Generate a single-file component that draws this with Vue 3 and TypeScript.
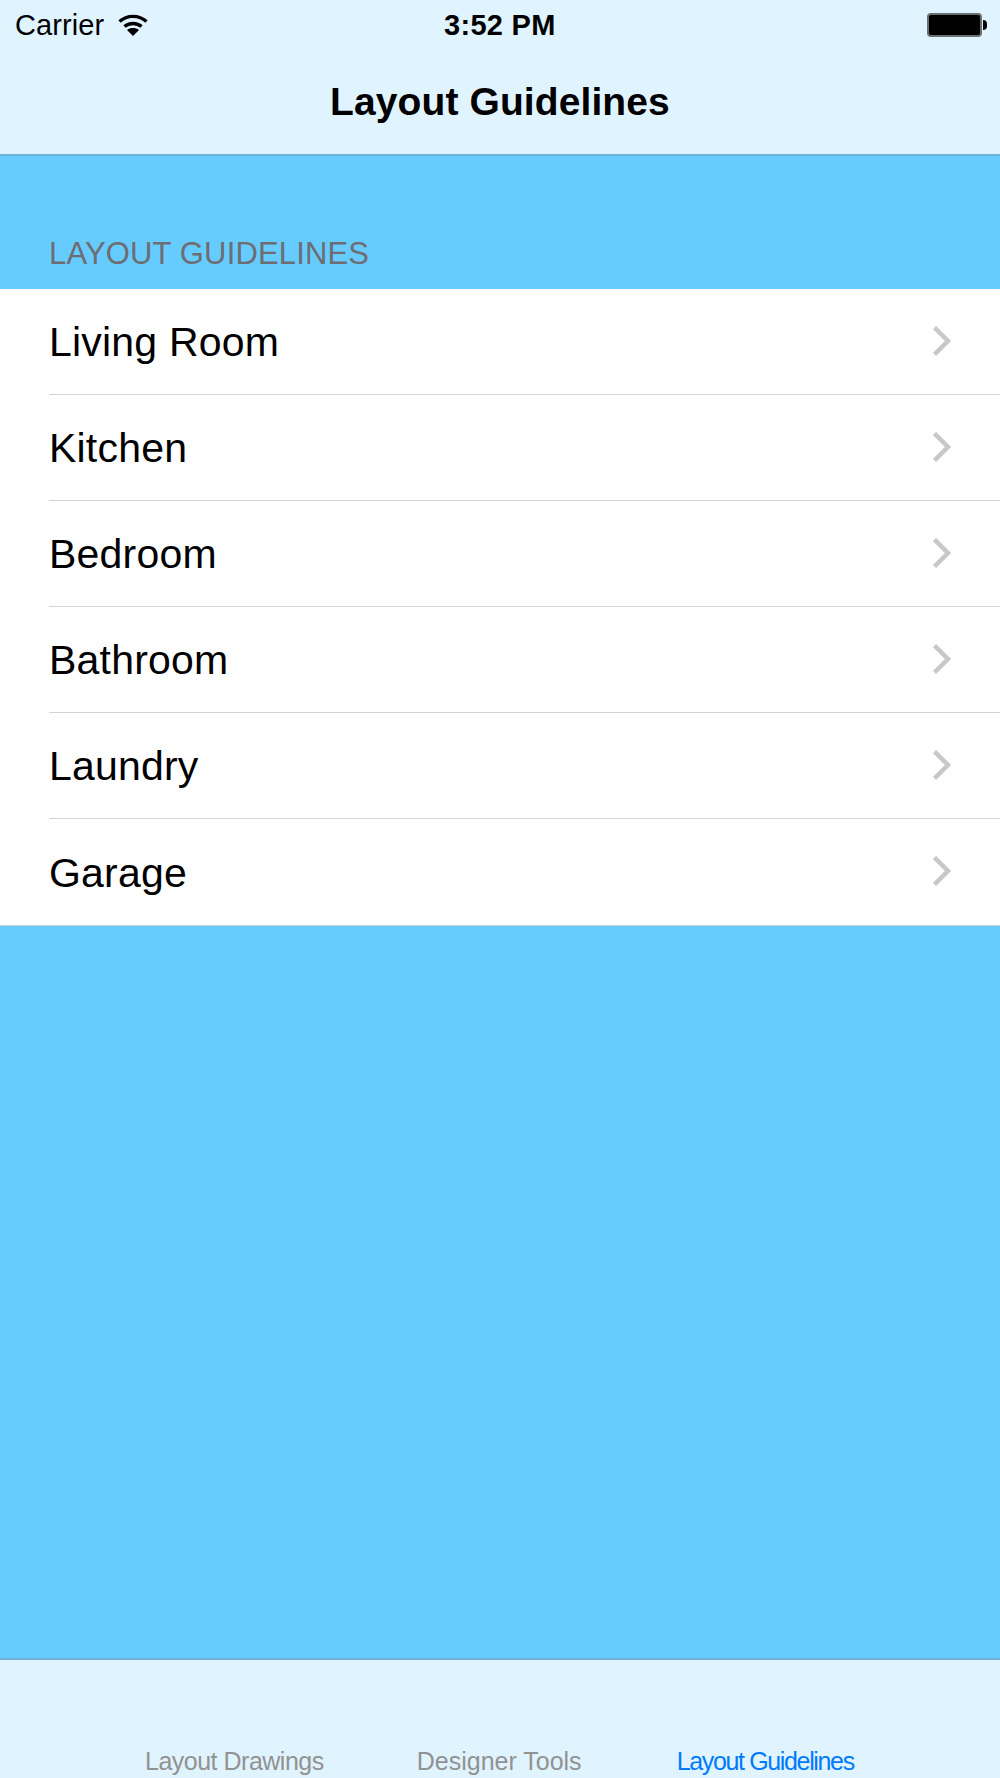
<script setup lang="ts">
const rooms: string[] = ['Living Room', 'Kitchen', 'Bedroom', 'Bathroom', 'Laundry', 'Garage']

// the labels are squeezed by different amounts in the reference
const tabs = [
  { label: 'Layout Drawings', cls: 'tab--drawings' },
  { label: 'Designer Tools', cls: 'tab--tools' },
  { label: 'Layout Guidelines', cls: 'tab--guidelines' },
]
</script>

<template>
  <div class="screen">
    <header class="topbar">
      <div class="status">
        <div class="status__left">
          <span class="carrier">Carrier</span>
          <svg class="wifi" width="30" height="22" viewBox="0 0 30 22">
            <path d="M1.500 7.500C9 0.600 21 0.600 28.500 7.500" fill="none" stroke="#000" stroke-width="3.400" />
            <path d="M6.500 12.500C11 8.400 19 8.400 23.500 12.500" fill="none" stroke="#000" stroke-width="3.400" />
            <path d="M9 16C12.500 13.400 17.500 13.400 21 16L15 22Z" fill="#000" />
          </svg>
        </div>
        <span class="time">3:52 PM</span>
        <div class="battery">
          <div class="battery__body"></div>
          <div class="battery__nub"></div>
        </div>
      </div>
      <h1 class="title">Layout Guidelines</h1>
    </header>

    <main class="content">
      <h2 class="section">LAYOUT GUIDELINES</h2>
      <ul class="list">
        <li v-for="room in rooms" :key="room" class="row">
          <div class="row__inner">
            <span class="row__label">{{ room }}</span>
            <svg class="chevron" width="20" height="32" viewBox="0 0 20 32">
              <path d="M1.500 1.500L15 15L1.500 28.500" fill="none" stroke="#c7c7cc" stroke-width="4.500" />
            </svg>
          </div>
        </li>
      </ul>
    </main>

    <nav class="tabbar">
      <span v-for="tab in tabs" :key="tab.label" class="tab" :class="tab.cls">{{ tab.label }}</span>
    </nav>
  </div>
</template>

<style>
html,
body {
  margin: 0;
  padding: 0;
}
</style>

<style scoped>
.screen {
  width: 1000px;
  height: 1778px;
  display: flex;
  flex-direction: column;
  overflow: hidden;
  background: #66ccff;
  font-family: "Liberation Sans", Arial, sans-serif;
  color: #000;
}

.topbar {
  height: 156px;
  box-sizing: border-box;
  background: #e0f4ff;
  border-bottom: 2px solid #6fb4d6;
}

.status {
  height: 50px;
  padding: 0 13px 0 15px;
  display: flex;
  align-items: center;
  justify-content: space-between;
  position: relative;
}

.status__left {
  display: flex;
  align-items: center;
  gap: 14px;
}

.carrier {
  font-size: 29px;
  letter-spacing: 0.1px;
}

.wifi {
  display: block;
}

.time {
  position: absolute;
  left: 444px;
  font-size: 29px;
  font-weight: bold;
  letter-spacing: 0.3px;
}

.battery {
  display: flex;
  align-items: center;
  gap: 1px;
}

.battery__body {
  width: 51px;
  height: 20px;
  background: #000;
  border: 2px solid #6b6f72;
  border-radius: 4px;
}

.battery__nub {
  width: 4px;
  height: 10px;
  background: #000;
  border-radius: 0 5px 5px 0;
}

.title {
  margin: 0;
  height: 104px;
  line-height: 104px;
  text-align: center;
  font-size: 39px;
  font-weight: bold;
  letter-spacing: 0.1px;
}

.content {
  flex: 1;
}

.section {
  margin: 0;
  height: 133px;
  box-sizing: border-box;
  padding: 80px 0 0 49px;
  font-size: 31px;
  line-height: 36px;
  font-weight: normal;
  letter-spacing: 0.15px;
  color: #6d6d72;
}

.list {
  margin: 0;
  padding: 0;
  list-style: none;
  background: #fff;
  border-bottom: 1px solid #c8d2d8;
}

.row {
  padding-left: 49px;
}

.row__inner {
  height: 106px;
  box-sizing: border-box;
  padding-right: 47px;
  display: flex;
  align-items: center;
  justify-content: space-between;
  border-bottom: 1px solid #d4d4d6;
}

.row:last-child .row__inner {
  border-bottom: 0;
}

.row__label {
  padding-top: 2px;
  font-size: 41px;
  letter-spacing: 0.2px;
}

.chevron {
  display: block;
}

.tabbar {
  height: 120px;
  box-sizing: border-box;
  background: #e0f4ff;
  border-top: 2px solid #6fb4d6;
  display: flex;
  padding: 87px 0 0 145px;
  font-size: 25px;
  line-height: 28px;
}

.tab {
  color: #929292;
  white-space: nowrap;
}

.tab--drawings {
  letter-spacing: -0.5px;
  margin-right: 93px;
}

.tab--tools {
  margin-right: 95px;
}

.tab--guidelines {
  color: #007aff;
  letter-spacing: -1.35px;
}
</style>
